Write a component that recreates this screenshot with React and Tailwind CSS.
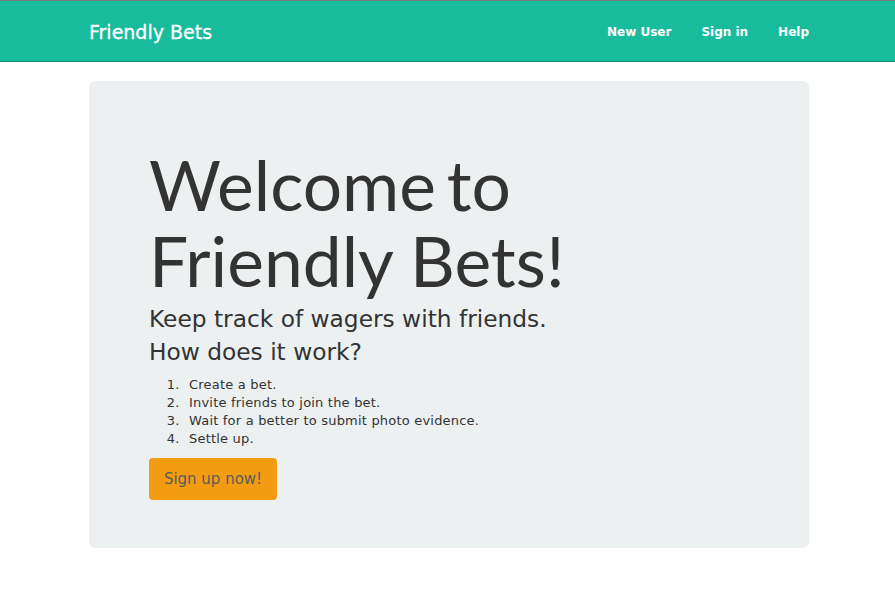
const steps = [
  "Create a bet.",
  "Invite friends to join the bet.",
  "Wait for a better to submit photo evidence.",
  "Settle up.",
];

const App = () => {
  return (
    <div className="min-h-[597px] bg-white font-['DejaVu_Sans',Verdana,sans-serif] text-[#333]">
      <nav className="h-[62px] border-t border-t-[#7a7a7a] border-b border-b-[#128f76] bg-[#18bc9c]">
        <div className="ml-[89px] flex h-full w-[720px] items-center justify-between pt-[2px]">
          <a href="#" className="text-[19px] text-white [-webkit-text-stroke:0.3px_white]">
            Friendly Bets
          </a>
          <ul className="flex items-center gap-[30px] text-[12px] font-bold text-white">
            <li>
              <a href="#">New User</a>
            </li>
            <li>
              <a href="#">Sign in</a>
            </li>
            <li>
              <a href="#">Help</a>
            </li>
          </ul>
        </div>
      </nav>

      <section className="ml-[89px] mt-[19px] w-[720px] rounded-md bg-[#ecf0f1] px-[60px] pt-[65px] pb-[48px]">
        <h1 className="font-['Lato',sans-serif] text-[69.5px] leading-[76px] text-[#333]">
          <span className="[word-spacing:-7px]">Welcome to</span>
          <br />
          Friendly Bets!
        </h1>
        <p className="mt-[4px] text-[23.3px] leading-[33px]">
          Keep track of wagers with friends.
        </p>
        <p className="text-[23.3px] leading-[33px]">How does it work?</p>
        <ol className="mt-[8px] list-decimal pl-[35px] text-[13px] leading-[18px] tracking-[0.2px]">
          {steps.map((step) => (
            <li key={step} className="pl-[5px]">
              {step}
            </li>
          ))}
        </ol>
        <button className="mt-[10px] h-[42px] w-[128px] rounded bg-[#f39c12] text-[15px] text-[#5c5c5c]">
          Sign up now!
        </button>
      </section>
    </div>
  );
};

export default App;
